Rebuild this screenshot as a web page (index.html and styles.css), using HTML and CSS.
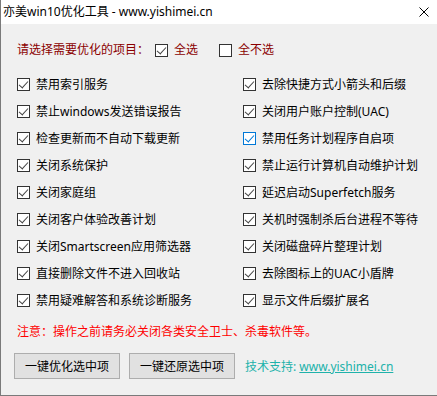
FILE: index.html
```html
<!DOCTYPE html>
<html lang="zh-CN">
<head>
    <meta charset="UTF-8">
    <title>亦美win10优化工具</title>
    <link rel="stylesheet" href="styles.css">
</head>
<body>
    <div class="window">
        <div class="titlebar">
            <span class="title">亦美win10优化工具 - www.yishimei.cn</span>
            <svg class="close" width="10" height="10" viewBox="0 0 10 10">
                <path d="M0.5 0.5 L9.5 9.5 M9.5 0.5 L0.5 9.5" stroke="#000" stroke-width="1" fill="none"/>
            </svg>
        </div>

        <div class="content">
            <div class="select-row">
                <span class="select-label">请选择需要优化的项目：</span>
                <label class="check select-opt"><span class="box on"></span>全选</label>
                <label class="check select-opt"><span class="box"></span>全不选</label>
            </div>

            <div class="options">
                <label class="check"><span class="box on"></span>禁用索引服务</label>
                <label class="check"><span class="box on"></span>去除快捷方式小箭头和后缀</label>
                <label class="check"><span class="box on"></span>禁止windows发送错误报告</label>
                <label class="check"><span class="box on"></span>关闭用户账户控制(UAC)</label>
                <label class="check"><span class="box on"></span>检查更新而不自动下载更新</label>
                <label class="check"><span class="box on hover"></span>禁用任务计划程序自启项</label>
                <label class="check"><span class="box on"></span>关闭系统保护</label>
                <label class="check"><span class="box on"></span>禁止运行计算机自动维护计划</label>
                <label class="check"><span class="box on"></span>关闭家庭组</label>
                <label class="check"><span class="box on"></span>延迟启动Superfetch服务</label>
                <label class="check"><span class="box on"></span>关闭客户体验改善计划</label>
                <label class="check"><span class="box on"></span>关机时强制杀后台进程不等待</label>
                <label class="check"><span class="box on"></span>关闭Smartscreen应用筛选器</label>
                <label class="check"><span class="box on"></span>关闭磁盘碎片整理计划</label>
                <label class="check"><span class="box on"></span>直接删除文件不进入回收站</label>
                <label class="check"><span class="box on"></span>去除图标上的UAC小盾牌</label>
                <label class="check"><span class="box on"></span>禁用疑难解答和系统诊断服务</label>
                <label class="check"><span class="box on"></span>显示文件后缀扩展名</label>
            </div>

            <p class="warning">注意：操作之前请务必关闭各类安全卫士、杀毒软件等。</p>

            <div class="actions">
                <button class="btn">一键优化选中项</button>
                <button class="btn">一键还原选中项</button>
                <span class="support">技术支持: <a href="#">www.yishimei.cn</a></span>
            </div>
        </div>
    </div>
</body>
</html>
```

FILE: styles.css
```css
* {
    box-sizing: border-box;
}

body {
    margin: 0;
    font-family: "Noto Sans", "Noto Sans CJK SC", sans-serif;
    font-size: 12px;
    color: #000;
    background: #fff;
}

.window {
    width: 437px;
    height: 396px;
    background-color: #f0f0f0;
    border-left: 1px solid #7a7a7a;
    border-bottom: 1px solid #7a7a7a;
}

.titlebar {
    height: 24px;
    background-color: #fff;
    display: flex;
    align-items: center;
    justify-content: space-between;
    padding: 0 8px 0 2px;
}

.title {
    font-size: 12px;
    line-height: 16px;
}

.content {
    padding: 18px 0 0 16px;
}

.select-row {
    display: flex;
    align-items: center;
    height: 16px;
    line-height: 16px;
    color: #8b0000;
}

.select-label {
    width: 138px;
}

.select-opt {
    margin-right: 21px;
}

.options {
    display: grid;
    grid-template-columns: 226px 1fr;
    grid-auto-rows: 27px;
    margin-top: 13px;
}

.check {
    display: flex;
    align-items: center;
    gap: 6px;
    line-height: 16px;
    white-space: nowrap;
}

.box {
    width: 13px;
    height: 13px;
    border: 1px solid #333;
    background-color: #fff;
    flex-shrink: 0;
    position: relative;
}

.box.on::after {
    content: "";
    position: absolute;
    left: 3px;
    top: 0;
    width: 4px;
    height: 8px;
    border-right: 1px solid #444;
    border-bottom: 1px solid #444;
    transform: rotate(42deg);
    transform-origin: center;
}

.box.hover {
    border-color: #0078d7;
}

.box.hover::after {
    border-color: #0078d7;
}

.warning {
    color: #ff0000;
    margin: 10px 0 0 0;
    line-height: 16px;
}

.actions {
    display: flex;
    align-items: center;
    margin-top: 13px;
    margin-left: -3px;
}

.btn {
    width: 106px;
    height: 26px;
    background-color: #e1e1e1;
    border: 1px solid #adadad;
    font-family: inherit;
    font-size: 12px;
    color: #000;
    padding: 0;
    margin-right: 9px;
}

.support {
    color: #20b2aa;
    margin-left: 1px;
}

.support a {
    color: #20b2aa;
}
```
